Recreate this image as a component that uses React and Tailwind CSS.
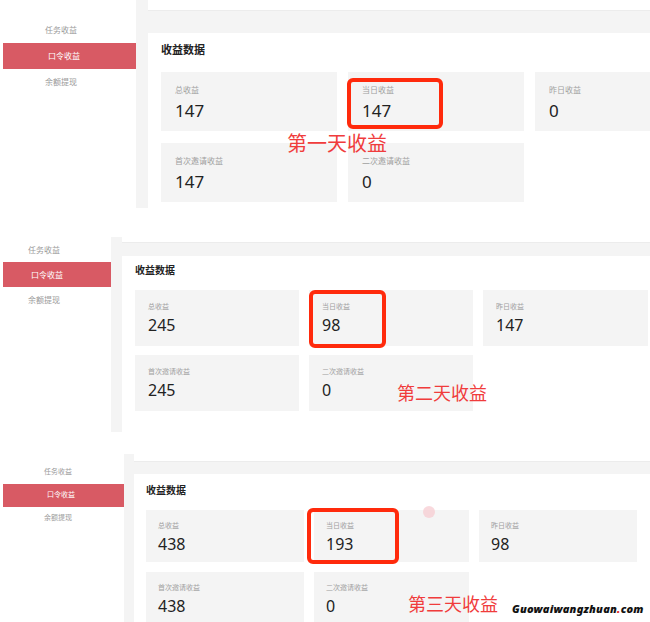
import React from "react";

const font = "font-['Noto_Sans','Noto_Sans_CJK_SC',sans-serif]";

const panels = [
  {
    day: "第一天收益",
    stats: ["147", "147", "0", "147", "0"],
    wrap: "h-[208px] mt-0",
    side: "w-[136px] pt-[9px] mt-[8px]",
    item: "h-[26px] pl-[45px] text-[8px]",
    active: "ml-[3px] pl-[42px]",
    gutter: "w-[12px]",
    topA: "h-[11px]",
    topB: "h-[22px]",
    body: "pl-[13px] pt-[11px]",
    title: "text-[11px] h-[28px]",
    grid: "grid-cols-[176px_176px_176px] gap-x-[11px] gap-y-[12px]",
    card: "h-[59px] pl-[14px] pt-[14px]",
    label: "text-[8px]",
    value: "text-[17px] mt-[6px]",
    box: "left-[347px] top-[78px] w-[96px] h-[51px]",
    note: "left-[287px] top-[134px] text-[20px]",
  },
  {
    day: "第二天收益",
    stats: ["245", "98", "147", "245", "0"],
    wrap: "h-[195px] mt-[29px]",
    side: "w-[111px] pt-0 mt-0 h-[76px]",
    item: "h-[25px] pl-[28px] text-[8px]",
    active: "ml-[3px] pl-[25px]",
    gutter: "w-[11px]",
    topA: "h-[6px]",
    topB: "h-[13px]",
    body: "pl-[13px] pt-[9px]",
    title: "text-[10px] h-[25px]",
    grid: "grid-cols-[164px_164px_165px] gap-x-[10px] gap-y-[9px]",
    card: "h-[56px] pl-[13px] pt-[13px]",
    label: "text-[7px]",
    value: "text-[16px] mt-[5px]",
    box: "left-[309px] top-[53px] w-[77px] h-[58px]",
    note: "left-[397px] top-[147px] text-[18px]",
  },
  {
    day: "第三天收益",
    stats: ["438", "193", "98", "438", "0"],
    wrap: "h-[197px] mt-[22px]",
    side: "w-[124px] pt-[4px] mt-[3px]",
    item: "h-[23px] pl-[44px] text-[7px]",
    active: "ml-[3px] pl-[41px]",
    gutter: "w-[10px]",
    topA: "h-[8px]",
    topB: "h-[12px]",
    body: "pl-[12px] pt-[11px]",
    title: "text-[10px] h-[25px]",
    grid: "grid-cols-[158px_155px_158px] gap-x-[10px] gap-y-[10px]",
    card: "h-[52px] pl-[12px] pt-[12px]",
    label: "text-[7px]",
    value: "text-[16px] mt-[5px]",
    box: "left-[307px] top-[54px] w-[92px] h-[56px]",
    note: "left-[408px] top-[141px] text-[18px]",
  },
];

const labels = ["总收益", "当日收益", "昨日收益", "首次邀请收益", "二次邀请收益"];

function Panel({ p, last }) {
  return (
    <section className={`relative flex overflow-hidden ${p.wrap}`}>
      {/* sidebar */}
      <aside className={`shrink-0 bg-white text-[#9a9a9a] ${p.side}`}>
        <div className={`flex items-center ${p.item}`}>任务收益</div>
        <div className={`flex items-center bg-[#d85a64] text-white ${p.item} ${p.active}`}>口令收益</div>
        <div className={`flex items-center ${p.item}`}>余额提现</div>
      </aside>
      <div className={`shrink-0 bg-[#f4f4f4] ${p.gutter}`} />

      {/* main */}
      <main className="flex flex-1 flex-col bg-[#f4f4f4] overflow-hidden">
        <div className={`bg-white border-b border-[#ececec] ${p.topA}`} />
        <div className={p.topB} />
        <div className={`flex-1 bg-white ${p.body}`}>
          <h2 className={`font-bold leading-none text-[#222] ${p.title}`}>收益数据</h2>
          <div className={`grid ${p.grid}`}>
            {p.stats.map((v, i) => (
              <div key={i} className={`bg-[#f4f4f4] ${p.card}`}>
                <div className={`text-[#a0a0a0] leading-none ${p.label}`}>{labels[i]}</div>
                <div className={`text-[#222] leading-tight ${p.value}`}>{v}</div>
              </div>
            ))}
          </div>
        </div>
      </main>

      {/* annotations */}
      <div className={`absolute rounded-[6px] border-[4px] border-[#ff2a0c] ${p.box}`} />
      <div className={`absolute leading-none text-[#f03c3c] ${p.note}`}>{p.day}</div>
      {last && (
        <>
          <div className="absolute left-[423px] top-[52px] h-[12px] w-[12px] rounded-full bg-[#f7c9cf] opacity-70" />
          <div className="absolute left-[512px] top-[147px] text-[11px] font-black italic tracking-[0.2px] text-[#111] [text-shadow:0_0_2px_#fff,1px_1px_0_#fff]">
            Guowaiwangzhuan<span className="text-[#e0231c]">.</span>com
          </div>
        </>
      )}
    </section>
  );
}

export default function App() {
  return (
    <div className={`w-[650px] h-[622px] bg-white overflow-hidden ${font}`}>
      {panels.map((p, i) => (
        <Panel key={i} p={p} last={i === 2} />
      ))}
    </div>
  );
}
